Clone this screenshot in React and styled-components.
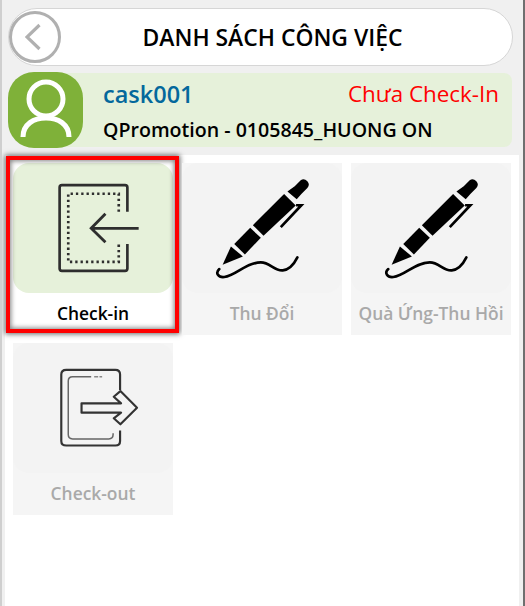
import React from 'react';
import styled, { createGlobalStyle } from 'styled-components';

const GlobalStyle = createGlobalStyle`
    html, body {
        margin: 0;
        padding: 0;
        background: #f0f0f0;
    }
`;

const Screen = styled.div`
    border-left: 2px solid #cfcfcf;
    border-right: 2px solid #6f6f6f;
    box-sizing: border-box;
    display: flex;
    flex-direction: column;
    font-family: 'Open Sans', 'Noto Sans', sans-serif;
    height: 606px;
    overflow: hidden;
    width: 525px;
`;

const Header = styled.div`
    align-items: center;
    background: #fff;
    border: 1px solid #d6d6d6;
    border-radius: 29px;
    box-sizing: border-box;
    display: flex;
    height: 58px;
    margin: 8px 10px 0 6px;
`;

const BackButton = styled.div`
    align-items: center;
    border: 3px solid #b0b0b0;
    border-radius: 50%;
    box-sizing: border-box;
    display: flex;
    height: 52px;
    justify-content: center;
    padding-right: 5px;
    width: 52px;
`;

const Title = styled.div`
    color: #000;
    flex: 1;
    font-size: 22.9px;
    font-weight: 600;
    margin-right: 28px;
    text-align: center;
`;

const UserRow = styled.div`
    display: flex;
    height: 76px;
    margin: 6px 11px 0 6px;
`;

const Avatar = styled.div`
    background: #7fb139;
    border-radius: 26px;
    flex: none;
    height: 76px;
    overflow: hidden;
    width: 75px;
    z-index: 1;
`;

const UserInfo = styled.div`
    background: #e6f1da;
    border-radius: 0 8px 8px 0;
    display: flex;
    flex: 1;
    flex-direction: column;
    justify-content: center;
    margin: 1px 0 1px -20px;
    padding: 2px 13px 0 40px;
`;

const InfoLine = styled.div`
    align-items: center;
    display: flex;
    justify-content: space-between;
    line-height: 30px;
`;

const UserName = styled.span`
    color: #04689c;
    font-size: 23.5px;
    font-weight: 600;
`;

const Status = styled.span`
    color: #ff0000;
    font-size: 22.4px;
    font-weight: 500;
`;

const Project = styled.div`
    color: #000;
    font-size: 19.6px;
    font-weight: 600;
    line-height: 27px;
    margin-top: 7px;
`;

const Panel = styled.div`
    background: #fff;
    box-sizing: border-box;
    display: grid;
    flex: 1;
    gap: 8px 9px;
    grid-auto-rows: 172px;
    grid-template-columns: repeat(3, 160px);
    margin: 7px 4px 0 3px;
    padding: 8px 0 0 8px;
`;

const Tile = styled.div`
    align-items: center;
    background: ${(p) => (p.$active ? '#fff' : '#f5f5f5')};
    display: flex;
    flex-direction: column;
    position: relative;
`;

const Highlight = styled.div`
    border: 4px solid #ff0000;
    box-shadow: 0 0 5px 1px rgba(0, 0, 0, 0.6), inset 0 0 5px 1px rgba(0, 0, 0, 0.5);
    box-sizing: border-box;
    height: 177px;
    left: -7px;
    position: absolute;
    top: -7px;
    width: 173px;
`;

const IconBox = styled.div`
    align-items: center;
    background: ${(p) => (p.$active ? '#e6f1da' : '#f3f3f3')};
    border-radius: 16px;
    display: flex;
    height: 130px;
    justify-content: center;
    width: 100%;
`;

const TileLabel = styled.div`
    color: ${(p) => (p.$active ? '#000' : '#a9a9a9')};
    font-size: 17.4px;
    font-weight: 600;
    line-height: 41px;
    white-space: nowrap;
`;

const CheckInIcon = () => (
    <svg width="93" height="96" viewBox="139 90 280 288" fill="none" stroke="#2e2e2e">
        <path d="M381 185 V112 Q381 105 374 105 H184 Q177 105 177 112 V356 Q177 363 184 363 H374 Q381 363 381 356 V282" strokeWidth="8" />
        <path d="M355 185 V131 H203 V336 H355 V282" strokeWidth="8" strokeDasharray="7 9" />
        <path d="M415 235 H272 M315 191 L272 235 L315 277" strokeWidth="8.5" />
    </svg>
);

const PenIcon = () => (
    <svg width="97" height="105" viewBox="100 60 290 316" fill="none">
        <path d="M125 327 L150 272 L186 302 Z" fill="#000" />
        <path d="M160 265 L208 216 L240 246 L192 296 Z" fill="#000" />
        <path d="M216 208 L310 114 L345 149 L248 240 Z" fill="#000" />
        <path d="M320 107 L342 91 L360 73 Q370 66 380 76 Q389 86 380 96 L362 114 L348 130 Z" fill="#000" />
        <path d="M346 148 H362 L300 214" stroke="#000" strokeWidth="8" />
        <path d="M115 340 C102 352 112 366 130 364 C165 360 195 320 240 320 C268 320 280 346 306 344 C328 342 340 325 350 305" stroke="#000" strokeWidth="8" strokeLinecap="round" />
    </svg>
);

const CheckOutIcon = () => (
    <svg width="93" height="86" viewBox="139 90 280 258" fill="none">
        <path d="M359 165 V118 Q359 104 345 104 H197 Q182 104 182 118 V318 Q182 332 197 332 H345 Q359 332 359 318 V287" stroke="#333" strokeWidth="6.5" />
        <path d="M272 125 H216 Q203 125 203 138 V299 Q203 312 216 312 H325 Q338 312 338 299 V295" stroke="#666" strokeWidth="4.5" />
        <path d="M281 125 H305" stroke="#888" strokeWidth="4.5" strokeDasharray="12 4" />
        <path d="M243 205 H362 L340 185 L360 168 L410 218 L360 268 L340 250 L362 233 H243 Z" stroke="#333" strokeWidth="6.5" strokeLinejoin="round" />
    </svg>
);

const tiles = [
    { label: 'Check-in', icon: <CheckInIcon />, active: true },
    { label: 'Thu Đổi', icon: <PenIcon /> },
    { label: 'Quà Ứng-Thu Hồi', icon: <PenIcon /> },
    { label: 'Check-out', icon: <CheckOutIcon /> },
];

const App = () => {
    return (
        <Screen>
            <GlobalStyle />
            <Header>
                <BackButton>
                    <svg width="16" height="28" viewBox="0 0 16 28" fill="none">
                        <path d="M14.5 2 L2 14 L14.5 26" stroke="#b0b0b0" strokeWidth="3.2" />
                    </svg>
                </BackButton>
                <Title>DANH SÁCH CÔNG VIỆC</Title>
            </Header>

            <UserRow>
                <Avatar>
                    <svg width="75" height="76" viewBox="0 0 75 76" fill="none" stroke="#fff" strokeWidth="5">
                        <circle cx="38" cy="27" r="17" />
                        <path d="M15 65 C15 52 26 46 38 46 C50 46 61 52 61 65" />
                    </svg>
                </Avatar>
                <UserInfo>
                    <InfoLine>
                        <UserName>cask001</UserName>
                        <Status>Chưa Check-In</Status>
                    </InfoLine>
                    <Project>QPromotion - 0105845_HUONG ON</Project>
                </UserInfo>
            </UserRow>

            <Panel>
                {tiles.map((t) => (
                    <Tile key={t.label} $active={t.active}>
                        <IconBox $active={t.active}>{t.icon}</IconBox>
                        <TileLabel $active={t.active}>{t.label}</TileLabel>
                        {t.active && <Highlight />}
                    </Tile>
                ))}
            </Panel>
        </Screen>
    );
};

export default App;
